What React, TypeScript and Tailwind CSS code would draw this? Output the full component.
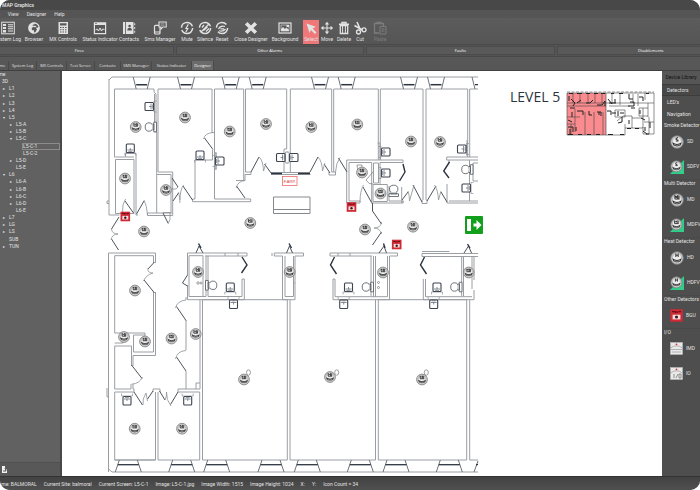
import React from 'react';
import { FaGlobeAfrica } from 'react-icons/fa';

const line = { fill: 'none', stroke: 'currentColor' } as const;

function Glyph({ children }: { children: React.ReactNode }) {
  return (
    <svg viewBox="0 0 14 14" className="size-[14px] shrink-0" aria-hidden="true">
      {children}
    </svg>
  );
}

const icons: Record<string, React.ReactNode> = {
  log: (
    <Glyph>
      <rect x="0.7" y="1.2" width="12.6" height="11.6" strokeWidth="1" {...line} />
      <path d="M2 3h3v2H2zM2 6h3v2H2zM2 9h3v2.500H2z" fill="currentColor" />
      <path d="M7 3.800h5M7 5.800h5M7 7.800h5M7 10h5" strokeWidth="1.100" {...line} />
    </Glyph>
  ),
  globe: <FaGlobeAfrica className="size-[14px] p-px" aria-hidden="true" />,
  calc: (
    <Glyph>
      <path
        fillRule="evenodd"
        d="M2.500 1h9.500v12h-9.500zM4 2.300v2.200h6.500V2.300zM4 6v1h1.500V6zM6.500 6v1H8V6zM9 6v1h1.500V6zM4 8.300v1h1.500v-1zM6.500 8.300v1H8v-1zM9 8.300v1h1.500v-1zM4 10.500v1h1.500v-1zM6.500 10.500v1H8v-1zM9 10.500v1h1.500v-1z"
        fill="currentColor"
      />
    </Glyph>
  ),
  status: (
    <Glyph>
      <path fillRule="evenodd" d="M.8 1.200h12.400v12H.8zM2 4v8h10V4z" fill="currentColor" />
      <path d="M2.500 9l1.500-1 1.500 2 1.500-3 1.500 3 1-2 2 .500" strokeWidth="1" {...line} />
      <path d="M2 2.500h2" stroke="#555" strokeWidth=".6" />
    </Glyph>
  ),
  contacts: (
    <Glyph>
      <path d="M1 1h2v12H1zM3.800 1h7.700v12H3.800z" fill="currentColor" />
      <path d="M12.200 2.200h1v2h-1zM12.200 6h1v2h-1zM12.200 9.800h1v2h-1z" fill="currentColor" />
      <circle cx="7.600" cy="5" r="1.300" fill="#555" />
      <path d="M5.300 9.500q0-2.800 2.300-2.800t2.300 2.800z" fill="#555" />
    </Glyph>
  ),
  sms: (
    <Glyph>
      <rect x="1.500" y="4.300" width="5.500" height="8.700" rx="1" strokeWidth="1.200" {...line} />
      <path d="M1.500 11h5.500" strokeWidth="1" {...line} />
      <path d="M6 1h7.200v5H10l-2 2.200V6H6z" fill="#575757" stroke="currentColor" strokeWidth="1.100" />
      <path d="M7.500 2.800h4M7.500 4.200h4" strokeWidth=".5" {...line} />
    </Glyph>
  ),
  mute: (
    <Glyph>
      <circle cx="7" cy="7" r="5.600" strokeWidth="1.500" strokeDasharray="15 2.600" {...line} />
      <path d="M8.300 3.200L6 7.500h1.800L5.800 11" strokeWidth="1.200" {...line} />
    </Glyph>
  ),
  silence: (
    <Glyph>
      <circle cx="7" cy="7" r="5.600" strokeWidth="1.500" strokeDasharray="15 2.600" {...line} />
      <path d="M2.800 11.200l8.400-8.400M4 6.500l2-2.500M5.500 9.500l4-3.500M8 10.500l3-3" strokeWidth="1.300" {...line} />
    </Glyph>
  ),
  reset: (
    <Glyph>
      <circle cx="7" cy="7" r="5.600" strokeWidth="1.500" strokeDasharray="13 4.600" {...line} />
      <path d="M3.500 8q2-4 6.500-2.500M4 9.800q4 1.200 6.500-1.800M5.500 7.800h3.500" strokeWidth="1.200" {...line} />
    </Glyph>
  ),
  close: (
    <Glyph>
      <path d="M2.200 2.200l9.600 9.600M11.800 2.200l-9.600 9.600" strokeWidth="3.600" {...line} />
    </Glyph>
  ),
  image: (
    <Glyph>
      <rect x="1" y="2" width="12" height="10" strokeWidth="1.200" {...line} />
      <path d="M3 10V8l2-2 2 2 1.500-1.500L11 9v1zM8.500 4H11v2H8.500z" fill="currentColor" />
      <path d="M3 4h8v6H3z" strokeWidth=".6" {...line} />
    </Glyph>
  ),
  select: (
    <Glyph>
      <path d="M2.500 2.500l9.300 3.300-3.200 1.700 3.800 3.900-1.500 1.500-3.900-3.900-1.500 3z" fill="currentColor" />
    </Glyph>
  ),
  move: (
    <Glyph>
      <path d="M7 3v8M3 7h8" strokeWidth="1.100" {...line} />
      <path d="M7 .8l2.200 2.700H4.800zM7 13.200l2.200-2.700H4.800zM.8 7l2.700-2.200v4.400zM13.200 7l-2.700-2.200v4.400z" fill="currentColor" />
    </Glyph>
  ),
  trash: (
    <Glyph>
      <path d="M2 3.200h10M5 3V1.500h4V3" strokeWidth="1.400" {...line} />
      <path d="M3.300 4.500v8h7.400v-8z" strokeWidth="1.300" {...line} />
      <path d="M5.600 5v7M8.400 5v7" strokeWidth="1" {...line} />
    </Glyph>
  ),
  cut: (
    <Glyph>
      <path d="M4 1l3.500 8M1.500 4.500l8 4.500" strokeWidth="1.600" {...line} />
      <circle cx="11" cy="8.800" r="2" strokeWidth="1.300" {...line} />
      <circle cx="5.500" cy="11" r="2" strokeWidth="1.300" {...line} />
    </Glyph>
  ),
  paste: (
    <Glyph>
      <path d="M6 12H1.500V2.500h9V5M4 2.500V1.300h4v1.200" strokeWidth="1.300" {...line} />
      <path d="M7 5.500h6V13H7zM8.500 8h3M8.500 10h3" strokeWidth="1" {...line} />
    </Glyph>
  ),
};

const tools = [
  { icon: 'log', label: 'System Log', box: '-ml-2 w-8' },
  { icon: 'globe', label: 'Browser', box: 'w-5' },
  { icon: 'calc', label: 'MX Controls', box: 'w-[38px]' },
  { icon: 'status', label: 'Status Indicator', box: 'w-9' },
  { icon: 'contacts', label: 'Contacts', box: 'w-[22px]' },
  { icon: 'sms', label: 'Sms Manager', box: 'w-10' },
  { icon: 'mute', label: 'Mute', box: 'w-[14px]' },
  { icon: 'silence', label: 'Silence', box: 'w-[22px]' },
  { icon: 'reset', label: 'Reset', box: 'w-[12px]' },
  { icon: 'close', label: 'Close Designer', box: 'w-[46px]' },
  { icon: 'image', label: 'Background', box: 'mr-[7px] w-[22px]' },
  { icon: 'select', label: 'Select', box: 'w-4 bg-[#f07878]' },
  { icon: 'move', label: 'Move', box: 'w-4' },
  { icon: 'trash', label: 'Delete', box: 'w-[18px]' },
  { icon: 'cut', label: 'Cut', box: 'w-[14px]' },
  { icon: 'paste', label: 'Paste', box: 'w-[26px] text-[#7c7c7c]' },
];

const tabs = [
  { label: 'System Log', box: 'w-7' },
  { label: 'MX Controls', box: 'w-[30px]' },
  { label: 'Test Server', box: 'w-7' },
  { label: 'Contacts', box: 'w-[26px]' },
  { label: 'SMS Manager', box: 'w-[31px]' },
  { label: 'Status Indicator', box: 'w-10' },
  { label: 'Designer', box: 'w-[22px] bg-[#6b6b6b] text-white' },
];

const indents = ['pl-[2px]', 'pl-[3px]', 'pl-[10px]', 'pl-[17px]'];

const tree: [number, string, string][] = [
  [0, '', '3D'],
  [1, '▸', 'L1'],
  [1, '▸', 'L2'],
  [1, '▸', 'L3'],
  [1, '▸', 'L4'],
  [1, '▾', 'L5'],
  [2, '▸', 'L5-A'],
  [2, '▸', 'L5-B'],
  [2, '▾', 'L5-C'],
  [3, ' ', 'L5-C-1'],
  [3, ' ', 'L5-C-2'],
  [2, '▸', 'L5-D'],
  [2, ' ', 'L5-E'],
  [1, '▾', 'L6'],
  [2, '▸', 'L6-A'],
  [2, '▸', 'L6-B'],
  [2, '▸', 'L6-C'],
  [2, '▸', 'L6-D'],
  [2, ' ', 'L6-E'],
  [1, '▸', 'L7'],
  [1, '▸', 'LG'],
  [1, '▸', 'LS'],
  [1, ' ', 'SUB'],
  [1, '▸', 'TUN'],
];

function Detector({ mark }: { mark: string }) {
  return (
    <>
      <circle r="5.400" fill="#cfcfcf" stroke="#7a7a7a" strokeWidth=".8" />
      <circle r="3.900" cy="-.3" fill="#ececec" stroke="#999" strokeWidth=".5" />
      <path d="M-4 .3Q0 3.200 4 .3L3 2.800Q0 4.400-3 2.800z" fill="#2a2a2a" />
      <path d="M-2.500 2.200q2.500 1.400 5 0" stroke="#ddd" strokeWidth=".5" fill="none" />
      <path d={mark} stroke="#333" strokeWidth=".9" fill="none" />
    </>
  );
}

const markM = 'M-1.800-1V-3.600L-.6-2.200.6-3.600V-1M1.700-1V-3.600M-2-.8H2.200';
const markS = 'M.8-3.800L-.8-3V-2.200L.8-1.600V-.8H-1';
const markH = 'M-1-3.800V-.8M1-3.800V-.8M-1-2.300H1';

function CallPoint() {
  return (
    <>
      <rect x="-4.800" y="-4.800" width="9.600" height="9.600" fill="#cf2a35" />
      <path d="M-3.500-3H-1.500M-.8-3.500V-2M.5-3.300V-2M1.500-3H3.500" stroke="#6b0d14" strokeWidth="1" />
      <rect x="-3" y="-.6" width="6" height="3.600" fill="#f6dcdc" />
      <circle cy="1.200" r="1.200" fill="#3a1a1a" />
    </>
  );
}

function DeviceIcon({ kind }: { kind: string }) {
  if (kind === 'BGU') {
    return (
      <svg viewBox="-5 -5 10 10" className="size-[13px] shrink-0" aria-hidden="true">
        <CallPoint />
      </svg>
    );
  }
  if (kind === 'IMD' || kind === 'IO') {
    return (
      <svg viewBox="0 0 13 13" className="size-[13px] shrink-0" aria-hidden="true">
        <rect x=".5" y=".5" width="12" height="12" fill="#e9e9e9" stroke="#bbb" strokeWidth=".6" />
        <path d="M.5 6Q6.500 1.500 12.500 6" fill="none" stroke="#999" strokeWidth=".7" />
        <circle cx="6.500" cy="2.300" r=".9" fill="#d33" />
        {kind === 'IO' ? (
          <path d="M4 7v4M6 11l2-4M9 7h2v4H9z" fill="none" stroke="#777" strokeWidth=".8" />
        ) : (
          <path d="M.5 7.500h12M2 10h9" fill="none" stroke="#999" strokeWidth=".7" />
        )}
      </svg>
    );
  }
  const mark = kind[0] === 'S' ? markS : kind[0] === 'M' ? markM : markH;
  return (
    <svg viewBox="-6 -6 12 12" className="size-[14px] shrink-0" aria-hidden="true">
      {kind.endsWith('FV') && <path d="M6-6V6H-6z" fill="#2fcf8a" />}
      <g transform={kind.endsWith('FV') ? 'translate(-.5 -.5) scale(.88)' : undefined}>
        <Detector mark={mark} />
      </g>
    </svg>
  );
}

const library: [string, string[]][] = [
  ['Smoke Detector', ['SD', 'SDFV']],
  ['Multi Detector', ['MD', 'MDFV']],
  ['Heat Detector', ['HD', 'HDFV']],
  ['Other Detectors', ['BGU']],
  ['I/O', ['IMD', 'IO']],
];

const detectors = [
  [135.7, 127], [185, 117.5], [229.7, 131.5], [266, 124], [125, 178.5], [166, 190], [144, 231.5],
  [250.3, 223], [311.3, 127], [357.3, 124.5], [411, 141.5], [440, 142], [362, 172.5], [380.5, 193.5],
  [365, 229.5], [413, 226.7], [198, 272], [289.7, 272], [383, 272.5], [468.7, 272.5], [135, 290.5],
  [124, 337], [145, 341.5], [171.5, 338.5], [195.7, 334], [244, 379.5], [330, 377], [422, 379.5],
  [134.7, 428.7], [182, 428.7],
];
const callPoints = [[125.3, 216.5], [351.5, 207], [396.7, 244.5]];
const topWindows = [141.7, 186, 230.7, 257.7, 320, 346.7, 409, 436];
const bottomWindows = [128.3, 181.7, 216.7, 271, 307.3, 360.3, 396, 449.3];
/* x, y, rotation in degrees */
const basins = [
  [130.3, 148.5, 0], [149.5, 106.5, 270], [200, 155.5, 0], [219.5, 161, 90], [281, 157.5, 270],
  [293.5, 157.5, 90], [385.5, 152, 90], [385.5, 173, 90], [462, 149, 270], [466.5, 188, 270],
  [230.3, 287.5, 0], [233.5, 304, 180], [127, 400.5, 180], [187.7, 400.5, 180], [348.5, 287.5, 0],
  [343.7, 304, 180], [437, 287.5, 0], [433.7, 304, 180],
];
const toilets = [
  [149, 127, 0], [213, 285.3, 180], [366, 287, 0], [393.7, 189, 90], [465.5, 169.5, 0], [454.5, 287, 0],
];

const upperWalls = `M112 77H478M109 80L112 77M109 79V215H119.500M109 201H107V203.500H109
M114.500 89H154V92L156 94V132M114.500 89V157H125.500V153.500H136V215H138M126 157H134M115.500 159.500H134V213.500H115.500z
M154.500 94V132H156.700V213M158 89V172H172.700V215.500H147.500V213H172M158 89H212V132.500H214
M157 174.500H171V212.500H163M212.500 150V160H195V199M195 199H192.500V201.700H250.700V199H214.500V89H243.700V180.500
M245.500 89H286.700V149M245.500 89V172H251V174.500H245V180.500H236M286.700 149H284V172M290.300 89V172M290.300 89H331.700V172H335.500V175H329V172M333.700 89V172M333.700 89H378.300V160
M271 172.500H310M271 174.500H310.500M380.300 89H423V200M380.300 89V160M426 89H467.700V157M426 89V200M478 89H469.700V157
M346.700 203V160H403V162.500H380V184M349 201V162.500H371.700V203M346.700 203H360V201H349M373.500 163H378.500V183H373.500z
M373 184.500H387.300V201.500H373zM371 203H403V201H389V186M401.700 187V203M422 200V203.500H427V200
M478 157H446.700V160H478M447 184V203H478M449 201H478M469.500 160V201M478 163H473V181H478M403 200.500V203
M216 152V170M214 153H216V169H214M377.500 143H380V160M467 140V156M449 160V163`;

const lowerWalls = `M108.500 472V253H155.500V263M112 472H478M108.500 469L112 472M114.700 255.700H153.500V263M114.700 255.700V333H145V336M114.700 343H123V333
M155.500 292V355.500H133V366M153.500 292V352H133.500V335H145M153.500 333V336M114.700 346H131.500V366M114.700 346V389H131V384M133 384V389H134V392
M108.500 391V397H107V388M153 392V389H160V392M178 389V392H199.700V460H158V392M178 389H200V300
M114.700 392V460H155.500V392M114.700 392H134M187.500 275V253H247V256H205M187.500 285V299.700H205M189 255.700H203V296.500H189zM206 255.700V296.500H203M208 255.700V296.500H242V279H244.300V299.700H205
M186 300V297M186 320V350M186 371V389M196 389V383H200M202.500 299.700H287.300V460H202.500z
M274.300 253H303.500V256H295V299.700H282.500V256H274.300zM285 256V296.500H293.500V283H295M293.500 256V283
M290 299.700V460H375.500V299.700M330 253H397.500V256H389.500V299.700H333V279H335V296.700H387.500V256M330 253V256H372M371 256V296M373.500 256V297M375.500 256V297
M378.300 299.700H466.700V460H378.300zM422 251.500H449.500M422 253.500H478M422 253.500V256.500H478M423.300 279V299.700H474V290M425.500 279V296.700H472M461.700 256V296M463.500 256V296M472 256V289M474 256V280
M469.700 299.700V460H478M114.700 460H155.500M272 253V256M225 253V256M238 253V256M338 253V256M350 253V256`;

const doors = `M204.500 138L213 149.500M236.500 186L245 198M251 172L259 157M264.500 164L271 173M310 172L318 157M324 164L330 173M338.500 158L347 172
M363 187L371.500 202.500M402 200L408 192M413 185L422 202M427 201L436 186M441 192L447 202M372.500 203V211L381.500 224M381.500 232L372.500 245
M119 217L111.500 229M111.500 239L118.500 250M125 201L133.500 213M136.500 214L144 201M163 213L168 223M172 178L178 187M173 201L178.500 193M183 186L192.500 200
M154.500 262L148 269M144 280L154.500 293M187.500 275L182.500 283L187.500 286M176.500 306.500L186 320.500M176.500 357L186 371M131.500 365L142 378.500
M134 392L142.500 405M147.500 399L153 391M159.500 391L165 400M170.500 404.500L178 392M196 253L199 246L203 253M286.500 253L289.500 246L292.500 253M379 253L384 246L386.500 253M464 253L468.500 246L471.500 253`;

const doorSwings = `M213 132.500Q205 133 203.500 139M245 180.500Q238 181 236 188M259 157Q263 160 263.500 171L266 163M318 157Q322 161 322.500 171L325 163M340 157.500Q336 163 335.500 172
M363.500 185Q360 191 360 202M408 191Q409.500 195 409.500 201L414 185M434.500 185Q438 190 438.500 200L441 191M381.500 222Q381 228 374 228Q380 228 381.500 234
M111.500 229Q112 234 118 234Q112 234 111 240M125.500 199Q122 204 122.500 213M144 200Q147 206 147.500 215M168 224Q171 220 170 213M178 187Q177 190 172 189M180 203Q180 197 178.500 192M183.500 185Q180 190 180 200
M148 268Q147 273 153 273Q146 275 143.500 281M186 300Q177 301 175.500 308M186 350.500Q177 351 175.500 359M142.500 377Q139 384 132 384M143 405Q142 399 146 393L147.500 401M165 400Q167 396 166.500 392Q166 400 171 406`;

const darkParts = `M403 164L405 172L399.500 181M449.500 162L443.700 171L449 178M242 257L247 265L241.500 273M334.500 257L330.500 265L336.500 274M424.500 257L420.500 265L426.500 274
M271 173.500H282M298 173.500H310M198.500 243.500L201 248M289 243.500L291.500 248M383.500 243.500L385 248M467.500 244L470 248`;

const miniWalls = `M567 93H654V127M567 93V135H625M643 127V134H654V127M567 103H654M567 106H606M609 106H630M567 117H580M585 112V135M594 112V135M603 112V135M606 93V135
M573 93V103M580 93V103M588 93V103M595 93V103M602 93V103M612 93V104M620 93V105M575 109V132M567 124H575M571 124V135
M615 110H625V117H615zM617 121L623 116H632V128M625 124V135M632 118H643V128M625 128H643M643 108V118M639 108H648M639 108V116H648M648 103V117M645 93V100M633 94V103M644 122H654M649 117V134M638 94V106`;

const miniDark = `M569 93.500H573M577 93.500H582M586 93.500H590M594 93.500H598M601 93.500H605M611 93.500H614M619 93.500H623M646 93.500H649
M569 96V101M571 99L575 103L573 106M577 103L581 100M586 103H590L593 100M597 105H602L605 101V106M608 99L612 104M609 103H616M615 99V103
M570 108H575M572 112V117M577 111H583V115M589 111V115H592M597 112H601V116M599 112V115M607 111H611V115M612 113H616M618 111V116M620 113H624
M568 120L572 122M568 127H573M570 129V134M573 127V132M576 127V131M629 94V99H633M630 102H634V106H628M631 108H635M639 97H643V101M640 110V114
M622 117V122L618 123M629 120V124M645 127V131M650 122V128M641 118L645 120M643 131L647 134M568 134.500H573M578 134.500H582M587 134.500H591M596 134.500H600M608 134.500H613M620 134.500H624M646 134H649M627 128.500H631M635 128.500H639`;

function FloorPlan() {
  return (
    <svg
      viewBox="62 71 600 405"
      preserveAspectRatio="xMinYMin meet"
      className="block size-full"
      role="img"
      aria-label="Level 5 floor plan"
    >
      <g fill="none" strokeWidth="1">
        <path d={upperWalls} stroke="#9a9ea3" />
        <path d={lowerWalls} stroke="#9a9ea3" />
        <path d={doors} stroke="#4d545c" strokeWidth="1" />
        <path d={doorSwings} stroke="#8a9096" strokeWidth=".8" />
        <path d={darkParts} stroke="#2c3440" strokeWidth="1.400" />
        <path d="M273.500 197H310V213.500H273.500zM273.500 209.500H310" stroke="#85898e" />
        {topWindows.map((x) => (
          <g key={x} transform={`translate(${x} 77)`}>
            <path d="M-8.500 0L-5.500 12M8.500 0L5.500 12" stroke="#6c737b" />
            <path d="M-5.500 7.700H5.500" stroke="#2c3440" strokeWidth="1.500" />
          </g>
        ))}
        {bottomWindows.map((x) => (
          <g key={x} transform={`translate(${x} 460)`}>
            <path d="M-9 0L-13 12M9 0L13 12" stroke="#6c737b" />
            <path d="M-10.500 4.700H10.500" stroke="#2c3440" strokeWidth="1.300" />
          </g>
        ))}
        <path d="M472 77L475 89M477 464.500H478M478 461L474 472" stroke="#6c737b" />
        <path d="M475 84.700H478M476 464.700H478" stroke="#2c3440" strokeWidth="1.200" />
      </g>
      {basins.map(([x, y, r]) => (
        <g key={`${x}-${y}`} transform={`translate(${x} ${y}) rotate(${r})`} fill="none">
          <path d="M-5.500 4.500V7M5.500 4.500V7M-5.500 4.500H5.500" stroke="#8d9197" strokeWidth=".7" />
          <rect x="-4" y="-4.500" width="8" height="8.500" rx="1" fill="#fff" stroke="#3c4450" strokeWidth="1.100" />
          <path d="M-3 1.500H3M0-.5V2M-2 3.200H2" stroke="#6d747c" strokeWidth=".8" />
        </g>
      ))}
      {toilets.map(([x, y, r]) => (
        <g key={`${x}-${y}`} transform={`translate(${x} ${y}) rotate(${r})`} fill="#fff" stroke="#4d545c" strokeWidth=".8">
          <ellipse rx="3.800" ry="4.200" />
          <path d="M3.500-3H4.800V3H3.500M4.800-4.800H7.500V4.800H4.800z" />
        </g>
      ))}
      <g fill="none" stroke="#777" strokeWidth=".7">
        <ellipse cx="248.500" cy="372.500" rx="2" ry="2.700" />
        <ellipse cx="336.700" cy="372.500" rx="2" ry="2.700" />
        <ellipse cx="426.300" cy="372.500" rx="2" ry="2.700" />
        <circle cx="198" cy="283" r="1.200" />
        <circle cx="201" cy="283" r="1" />
        <circle cx="378.500" cy="282.500" r="1" />
        <circle cx="378.500" cy="287.500" r="1" />
        <path d="M357 165H362V171L358 172zM366 180L373 172M366 180Q369 185 373 184" />
      </g>
      {detectors.map(([x, y]) => (
        <g key={`${x}-${y}`} transform={`translate(${x} ${y})`}>
          <Detector mark={markM} />
        </g>
      ))}
      {callPoints.map(([x, y]) => (
        <g key={x} transform={`translate(${x} ${y})`}>
          <CallPoint />
        </g>
      ))}
      <rect x="282.500" y="176.500" width="14.500" height="9" fill="#fff" stroke="#ee6a6a" strokeWidth=".8" />
      <text x="289.700" y="183" textAnchor="middle" fontSize="4" className="fill-[#e33a3a] font-['Liberation_Sans',sans-serif]">
        F.ARP.
      </text>
      <rect x="465" y="216" width="18" height="18" rx="1" fill="#12a01c" />
      <path d="M467 219h4v12h-4zM473.500 223.500h3v-3.500l5 5-5 5v-3.500h-3z" fill="#fff" />
      <text x="510" y="102" fontSize="14" className="fill-[#2c3440] font-['Open_Sans',sans-serif]">
        LEVEL 5
      </text>
      <rect x="567" y="93" width="39" height="42" fill="#fa8b8e" />
      <path d={miniWalls} fill="none" stroke="#444" strokeWidth=".6" />
      <path d={miniDark} fill="none" stroke="#222" strokeWidth="1" />
      <path d="M567 92H654" stroke="#777" strokeDasharray="3 1.500" strokeWidth=".8" />
    </svg>
  );
}

const statusItems = [
  'Current Site: balmoral',
  'Current Screen: L5-C-1',
  'Image: L5-C-1.jpg',
  'Image Width: 1515',
  'Image Height: 1024',
  'X:',
  'Y:',
  'Icon Count = 34',
];

export default function App() {
  return (
    <div className="bg-white">
      <div className="flex h-screen flex-col overflow-hidden rounded-[10px] bg-[#575757] font-[Roboto,'Noto_Sans',sans-serif] text-[5px] leading-[7px] whitespace-nowrap text-[#e2e2e2]">
        <header className="shrink-0">
          <h1 className="flex h-[10px] items-center bg-[#484848] pl-[2px] font-semibold">MAP Graphics</h1>
          <nav className="-ml-2 flex h-2 items-center gap-2 bg-[#555]" aria-label="Main">
            <button>File</button>
            <button>View</button>
            <button>Designer</button>
            <button>Help</button>
          </nav>
          <div className="flex h-[26px] bg-linear-to-b from-[#5c5c5c] to-[#555] pt-[2px]" role="toolbar">
            {tools.map((t) => (
              <button key={t.label} className={`flex shrink-0 flex-col items-center justify-between py-px ${t.box}`}>
                {icons[t.icon]}
                <span>{t.label}</span>
              </button>
            ))}
          </div>
          <div className="border-y border-[#494949] bg-[#545454] py-px font-['Open_Sans',sans-serif] text-[4px] font-medium text-white">
            <div className="-mr-[45px] -ml-[15px] grid grid-cols-4 gap-[2px]">
              {['Fires', 'Other Alarms', 'Faults', 'Disablements'].map((s) => (
                <div key={s} className="border border-[#4b4b4b] bg-[#595959] text-center">
                  {s}
                </div>
              ))}
            </div>
          </div>
          <div
            className="flex h-[14px] items-end border-b border-[#404040] font-['Open_Sans',sans-serif] text-[4px] font-medium text-[#e2e2e2]"
            role="tablist"
          >
            <button role="tab" className="-ml-[9px] h-[9px] w-[18px] border-r border-[#494949] text-center">
              Home
            </button>
            {tabs.map((t) => (
              <button key={t.label} role="tab" className={`h-[9px] border-r border-[#494949] text-center ${t.box}`}>
                {t.label}
              </button>
            ))}
          </div>
        </header>

        <div className="flex min-h-0 flex-1">
          <aside className="flex w-[62px] shrink-0 flex-col justify-between overflow-hidden border-r-2 border-[#484848] bg-[#616161]">
            <ul className="flex h-[179px] flex-col justify-between">
              <li className="-ml-2">Home</li>
              {tree.map(([depth, arrow, label]) => (
                <li
                  key={label}
                  className={`flex ${indents[depth]} ${label === 'L5-C-1' ? 'relative before:absolute before:inset-y-0 before:right-0 before:left-[22px] before:border before:border-[#8c8c8c]' : ''}`}
                >
                  {arrow && <span className="w-[6px] text-[4px]">{arrow}</span>}
                  <span>{label}</span>
                </li>
              ))}
            </ul>
            <div className="h-[14px] border-t border-[#505050] bg-[#585858]">
              <svg viewBox="0 0 10 12" className="h-3 w-[10px]" aria-label="Site tree" role="img">
                <path d="M2 3h3v2l2 2v3H2z" fill="#f2f2f2" />
                <path d="M5 5l1 3M3 8h3" stroke="#333" strokeWidth=".8" />
              </svg>
            </div>
          </aside>

          <main className="min-w-0 flex-1 bg-white">
            <FloorPlan />
          </main>

          <aside className="w-[38px] shrink-0 overflow-hidden bg-[#4e4e4e]">
            <h2 className="flex h-[13px] items-center justify-center bg-[#565656] text-[#121212]">Device Library</h2>
            <div className="flex h-[37px] flex-col">
              <button className="h-3 border-y border-[#3d3d3d] bg-[#484848] pl-[5px] text-left">Detectors</button>
              <button className="h-3 pl-[5px] text-left">LED&#39;s</button>
              <button className="h-3 pl-[5px] text-left">Navigation</button>
            </div>
            {library.map(([group, items]) => (
              <section key={group} className="pl-[2px]">
                <h3 className="border-t border-[#494949]">{group}</h3>
                {items.map((item) => (
                  <button key={item} className="flex h-[25px] w-full items-center gap-[3px] pl-[6px]">
                    <DeviceIcon kind={item} />
                    <span>{item}</span>
                  </button>
                ))}
              </section>
            ))}
          </aside>
        </div>

        <footer className="flex h-[14px] shrink-0 items-center gap-[7px] border-t border-[#333] bg-linear-to-b from-[#424242] to-[#505050] pt-[2px]">
          <span className="-ml-[5px]">Name: BALMORAL</span>
          {statusItems.map((s) => (
            <span key={s}>{s}</span>
          ))}
        </footer>
      </div>
    </div>
  );
}
